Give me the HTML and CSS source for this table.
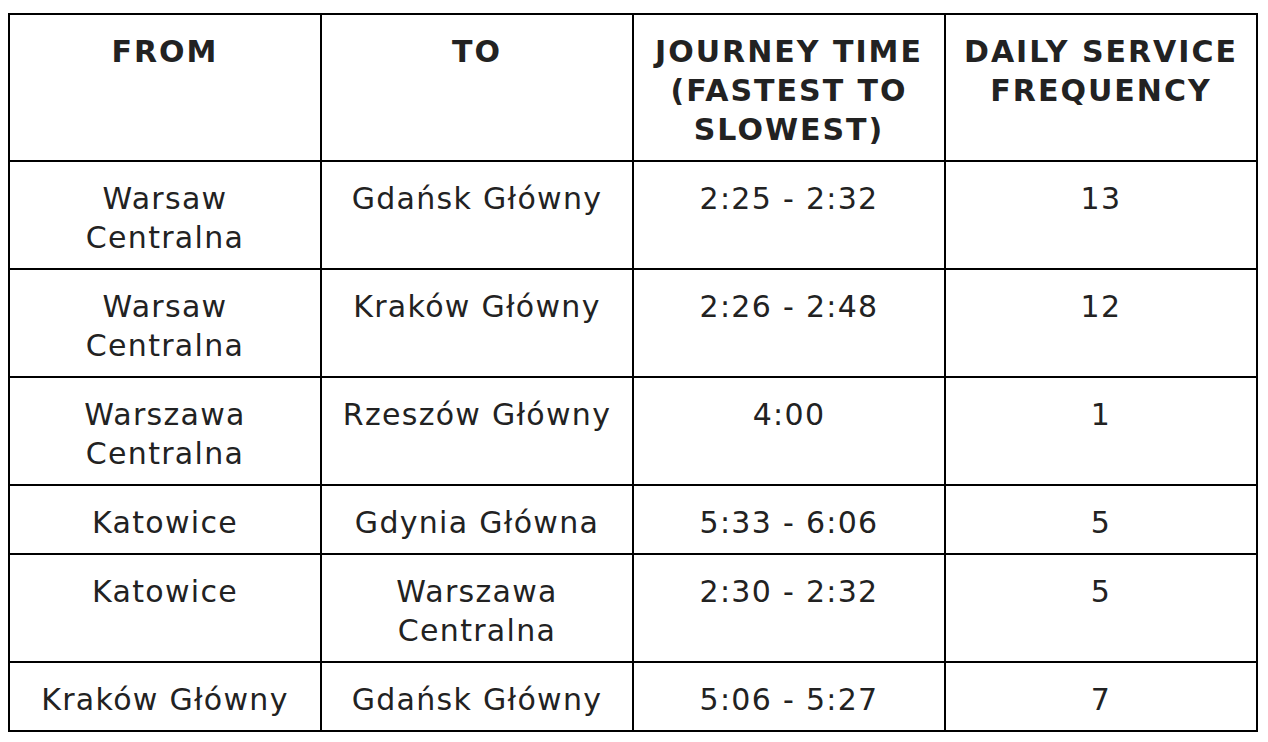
FILE: index.html
```html
<!DOCTYPE html>
<html>
<head>
<meta charset="utf-8">
<link rel="stylesheet" href="styles.css">
</head>
<body>
<table class="trains">
<thead>
<tr><th>FROM</th><th>TO</th><th>JOURNEY TIME (FASTEST TO SLOWEST)</th><th>DAILY SERVICE FREQUENCY</th></tr>
</thead>
<tbody>
<tr><td>Warsaw Centralna</td><td>Gdańsk Główny</td><td>2:25 - 2:32</td><td>13</td></tr>
<tr><td>Warsaw Centralna</td><td>Kraków Główny</td><td>2:26 - 2:48</td><td>12</td></tr>
<tr><td>Warszawa Centralna</td><td>Rzeszów Główny</td><td>4:00</td><td>1</td></tr>
<tr><td>Katowice</td><td>Gdynia Główna</td><td>5:33 - 6:06</td><td>5</td></tr>
<tr><td>Katowice</td><td>Warszawa Centralna</td><td>2:30 - 2:32</td><td>5</td></tr>
<tr><td>Kraków Główny</td><td>Gdańsk Główny</td><td>5:06 - 5:27</td><td>7</td></tr>
</tbody>
</table>
</body>
</html>
```
FILE: styles.css
```css
html, body {
  margin: 0;
  background: #fff;
}
body {
  padding: 13px 0 0 8px;
  font-family: "DejaVu Sans", Verdana, sans-serif;
  color: #222;
}
.trains {
  border-collapse: collapse;
  width: 1250px;
  table-layout: fixed;
  font-size: 30px;
  line-height: 39px;
}
.trains th, .trains td {
  border: 2px solid #000;
  padding: 17px 14px 11px;
  text-align: center;
  vertical-align: top;
}
.trains td {
  letter-spacing: 1.3px;
}
.trains th {
  font-weight: bold;
  letter-spacing: 2px;
}
```
